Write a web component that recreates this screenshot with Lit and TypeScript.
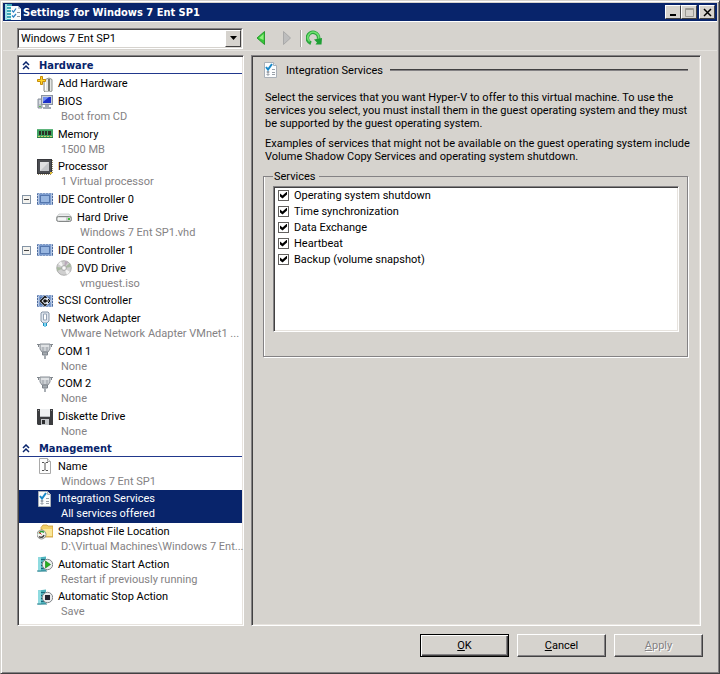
import { LitElement, html, svg, css, nothing, TemplateResult } from "lit";
import { customElement, state } from "lit/decorators.js";
import { classMap } from "lit/directives/class-map.js";

interface Item {
  id: string;
  label: string;
  detail?: string;
  icon: string;
  child?: boolean;
  expandable?: boolean;
}

interface Section {
  title: string;
  items: Item[];
}

const SECTIONS: Section[] = [
  {
    title: "Hardware",
    items: [
      { id: "add", label: "Add Hardware", icon: "add" },
      { id: "bios", label: "BIOS", detail: "Boot from CD", icon: "bios" },
      { id: "memory", label: "Memory", detail: "1500 MB", icon: "memory" },
      { id: "cpu", label: "Processor", detail: "1 Virtual processor", icon: "cpu" },
      { id: "ide0", label: "IDE Controller 0", icon: "ide", expandable: true },
      { id: "hdd", label: "Hard Drive", detail: "Windows 7 Ent SP1.vhd", icon: "hdd", child: true },
      { id: "ide1", label: "IDE Controller 1", icon: "ide", expandable: true },
      { id: "dvd", label: "DVD Drive", detail: "vmguest.iso", icon: "dvd", child: true },
      { id: "scsi", label: "SCSI Controller", icon: "scsi" },
      { id: "net", label: "Network Adapter", detail: "VMware Network Adapter VMnet1 ...", icon: "net" },
      { id: "com1", label: "COM 1", detail: "None", icon: "com" },
      { id: "com2", label: "COM 2", detail: "None", icon: "com" },
      { id: "floppy", label: "Diskette Drive", detail: "None", icon: "floppy" },
    ],
  },
  {
    title: "Management",
    items: [
      { id: "name", label: "Name", detail: "Windows 7 Ent SP1", icon: "name" },
      { id: "services", label: "Integration Services", detail: "All services offered", icon: "checklist" },
      { id: "snapshot", label: "Snapshot File Location", detail: "D:\\Virtual Machines\\Windows 7 Ent...", icon: "snapshot" },
      { id: "start", label: "Automatic Start Action", detail: "Restart if previously running", icon: "start" },
      { id: "stop", label: "Automatic Stop Action", detail: "Save", icon: "stop" },
    ],
  },
];

const SERVICES = [
  "Operating system shutdown",
  "Time synchronization",
  "Data Exchange",
  "Heartbeat",
  "Backup (volume snapshot)",
];

const server = svg`
  <path d="M1 1.5 9 .5V15L1 15.5Z" fill="#4fb3bd"/>
  <path d="M1 1.5 4 1V15.4L1 15.5Z" fill="#8fdbe0"/>
  <path d="M4 3.5h4M4 6.5h4M4 9.5h4M4 12.5h4" stroke="#17697a"/>
  <path d="M0 15h10" stroke="#2d7f8c"/>`;

const chip = svg`
  <rect y="2" width="16" height="12" fill="#b4c6e2"/>
  <path d="M.5 2v12M15.500 2v12" stroke="#4d6a9c" stroke-dasharray="2 1"/>
  <path d="M0 2.500h16M0 13.500h16" stroke="#7f9ac6" stroke-dasharray="2 1"/>
  <rect x="2" y="3" width="12" height="10" fill="#7c9dd0"/>
  <rect x="3.500" y="4.500" width="9" height="7" fill="#98b6e0" stroke="#5577ae"/>`;

const sheet = svg`
  <path d="M1.500.5h9l3 3v12h-12z" fill="#fbfcfd" stroke="#a9b0b8"/>
  <path d="M10.500.5v3h3" fill="#dfe4ea" stroke="#a9b0b8"/>`;

const ICONS: Record<string, TemplateResult> = {
  add: svg`
    <path d="M7 4 12 2l3 1.500V15l-2 1H8l-1-1z" fill="#e4e6e4" stroke="#8d918d"/>
    <path d="M12 3v12" stroke="#777b77" stroke-width="2"/>
    <path d="M8.500 5v9" stroke="#fff"/>
    <path d="M3.500.5h2v3h3v2h-3v3h-2v-3h-3v-2h3z" fill="#ffd528" stroke="#c58b08"/>`,
  bios: svg`
    <path d="M1 5h4v9H1z" fill="#b9bfc8" stroke="#8c949f"/>
    <path d="M2 7h2M2 9h2" stroke="#f5f7f9"/>
    <path d="M2 12h2v1H2z" fill="#5fbf4f"/>
    <rect x="4.500" y="1.500" width="11" height="9" fill="#c9cfd8" stroke="#8992a0"/>
    <rect x="6" y="3" width="8" height="6" fill="#1c2fc9"/>
    <path d="M6 3h6L6 8z" fill="#6f8cf0"/>
    <path d="M8 11h4v2h2v2H6v-2h2z" fill="#a4abb6"/>`,
  memory: svg`
    <rect y="3" width="16" height="9" fill="#3fa463"/>
    <path d="M0 3.500h16" stroke="#5fb57c"/>
    <path d="M2 5h2v4H2zM5 5h2v4H5zM8 5h2v4H8zM11 5h3v4h-3z" fill="#2b2f26"/>
    <path d="M1 10.500h14" stroke="#c9d36a" stroke-dasharray="2 1"/>
    <path d="M0 11.500h16" stroke="#2b8049"/>`,
  cpu: svg`
    <rect x=".5" y=".5" width="14" height="14" fill="#4b4d52" stroke="#37383c"/>
    <path d="M1 15.500h14M15.500 1v14" stroke="#9a8f6c" stroke-dasharray="1 1"/>
    <rect x="3" y="3" width="9" height="9" fill="#c4c6ca"/>
    <path d="M3 3h9L3 12z" fill="#dfe0e2"/>
    <path d="M13 13h2v2h-2z" fill="#e4bf3a"/>`,
  ide: chip,
  hdd: svg`
    <path d="M3 5h10l2.500 3H.5z" fill="#eceeee" stroke="#b3b6b6" stroke-width=".6"/>
    <rect x=".5" y="7.500" width="15" height="5" rx="2" fill="#c9cbcb" stroke="#858888"/>
    <path d="M2 10h8" stroke="#f3f5f5" stroke-width="3"/>
    <path d="M12 9h2v2h-2z" fill="#3fbf3a"/>`,
  dvd: svg`
    <circle cx="8" cy="8" r="7.300" fill="#cfcfcf" stroke="#a2a2a2" stroke-width=".8"/>
    <path d="M8 8 2 4l3-3zM8 8l6 4-3 3z" fill="#f4f4f4"/>
    <path d="M8 8 1 7l0 4zM8 8l6-5 1 4z" fill="#a9b9a2"/>
    <path d="M8 8 9 1l3 1z" fill="#b9a9b9"/>
    <circle cx="8" cy="8" r="2.500" fill="#e8e8e8" stroke="#999" stroke-width=".7"/>
    <circle cx="8" cy="8" r="1" fill="#fff"/>`,
  scsi: svg`
    ${chip}
    <path d="M8 2 14 8 8 14 2 8z" fill="#e9eef5"/>
    <path d="M9.500 5 8 3.500 3.500 8 8 12.500 9.500 11" fill="none" stroke="#111" stroke-width="1.500"/>
    <path d="M7 8h6M11 6l2 2-2 2" fill="none" stroke="#111"/>
    <circle cx="8" cy="8" r="1.800" fill="#111"/>`,
  net: svg`
    <path d="M5 1h6l1 1v8l-2 2H6l-2-2V2z" fill="#dfe6ef" stroke="#8695a8"/>
    <path d="M6.500 3h3v6h-3z" fill="#fff" stroke="#95a3b5"/>
    <path d="M6 12h1v3H6zM9 12h1v3H9z" fill="#1b93c4"/>
    <path d="M7 12h2v4H7z" fill="#7fd1ee"/>`,
  com: svg`
    <path d="M0 1.500h16M1.500 1v3M14.500 1v3" stroke="#80868c"/>
    <path d="M3 1h10v5l-2 3H5L3 6z" fill="#ccd0d4" stroke="#8b9198"/>
    <path d="M4 3h8" stroke="#f3f4f5"/>
    <path d="M5.500 9h5v3h-5z" fill="#a4aab0" stroke="#7d838a"/>
    <path d="M8 12v4" stroke="#a9aeb4" stroke-width="2"/>
    <path d="M6 4v4M10 4v4" stroke="#9a9fa6"/>`,
  floppy: svg`
    <path d="M0 0h16v16H1l-1-1z" fill="#3b3c3f"/>
    <path d="M3 0h10v8H3z" fill="#eef0f1"/>
    <path d="M3 7.500h10" stroke="#b9bcbf"/>
    <path d="M4 10h8v6H4z" fill="#c5c8cb"/>
    <path d="M5 11h3v4H5z" fill="#2d2e30"/>
    <path d="M1 1h1v1H1zM14 1h1v1h-1z" fill="#999"/>`,
  name: svg`
    <path d="M2.500.5h8l3 3v12h-11z" fill="#fdfdfd" stroke="#a9a9a9"/>
    <path d="M10.500.5v3h3" fill="#e6e6e6" stroke="#a9a9a9"/>
    <path d="M5 4.500h2l1 1 1-1h2M5 12.500h2l1-1 1 1h2M8 5.500v6" fill="none" stroke="#555"/>`,
  checklist: svg`
    ${sheet}
    <path d="M3 5 5 7.500 9 2" fill="none" stroke="#1888c8" stroke-width="2"/>
    <path d="M9 7.500h3M9 10.500h3M9 12.500h3" stroke="#9aa1a9"/>
    <path d="M4 9.500h2v1H4zM4 12h2v1H4z" fill="none" stroke="#9aa1a9"/>`,
  snapshot: svg`
    <path d="M4 3.500 6 1h4l1 1h5v11H5z" fill="#f1cf67" stroke="#c9983a" stroke-width=".8"/>
    <path d="M6 5h9v7H6z" fill="#fae79a"/>
    <circle cx="4.500" cy="10.500" r="4.500" fill="#f5f5f2" stroke="#777" stroke-width=".8"/>
    <path d="M2 9.500a3 3 0 0 1 5-1" fill="none" stroke="#299c35" stroke-width="1.500"/>
    <path d="M7 11a3 3 0 0 1-5 1.500" fill="none" stroke="#444" stroke-width="1.500"/>
    <path d="M4.500 10.500 2 8" stroke="#c22"/>`,
  start: svg`
    ${server}
    <circle cx="10.500" cy="8.500" r="5.200" fill="#e9ebec" stroke="#83878b"/>
    <path d="M8.500 5v7l5-3.500z" fill="#26b11c" stroke="#128010" stroke-width=".6"/>`,
  stop: svg`
    ${server}
    <circle cx="10.500" cy="8.500" r="5.200" fill="#e9ebec" stroke="#83878b"/>
    <path d="M8 6h5v5H8z" fill="#23232f"/>`,
  app: svg`
    <path d="M0 0h7v16H0z" fill="#3fa9b8"/>
    <path d="M0 0h2v16H0z" fill="#9adfe6"/>
    <path d="M2 2.500h4M2 5.500h4M2 8.500h4M2 11.500h4M2 14.500h4" stroke="#d5f2f4"/>
    <path d="M6 2h7l3 3v11H6z" fill="#fbfcfd"/>
    <path d="M13 2v3h3" fill="#c4cbd3"/>
    <path d="M7 6.500 8.500 8 11 4.500M7 11.500 8.500 13 11 10" fill="none" stroke="#2b7fc0" stroke-width="1.200"/>
    <path d="M12 8.500h3M12 12.500h3" stroke="#8d959e"/>`,
  back: svg`<path d="M10.500 1.500v13L3 8z" fill="#35c738" stroke="#2c9a30"/><path d="M9.500 4v6L5 8z" fill="#8df07c"/>`,
  forward: svg`<path d="M5.500 1.500v13L12.500 8z" fill="#bdbdbd" stroke="#a9a9a9"/>`,
  refresh: svg`
    <path d="M5 13.200A5.600 5.600 0 1 1 12.500 9" fill="none" stroke="#2aa53c" stroke-width="3.600"/>
    <path d="M3.600 11.500A5.400 5.400 0 1 1 12.500 9" fill="none" stroke="#6fe070" stroke-width="1.600"/>
    <path d="M8 9.500 16 8l-.5 6.500H9.500l1.500-2z" fill="#1f9f34"/>`,
};

const icon = (name: string, cls = "icon") =>
  html`<svg class=${cls} viewBox="0 0 16 16" aria-hidden="true">${ICONS[name]}</svg>`;

@customElement("app-root")
export class AppRoot extends LitElement {
  @state() private selected = "services";

  static styles = css`
    :host {
      --face: #d6d3ce;
      --navy: #08246b;
      display: block;
      height: 100vh;
      font: 11px/13px Roboto, "DejaVu Sans Condensed", sans-serif;
      color: #000;
    }
    * {
      box-sizing: border-box;
    }
    button,
    select,
    input {
      font: inherit;
      color: inherit;
      margin: 0;
      padding: 0;
      border-radius: 0;
      appearance: none;
    }
    svg {
      display: block;
      flex: none;
    }
    .icon {
      width: 16px;
      height: 16px;
    }
    .window {
      height: 100%;
      display: flex;
      flex-direction: column;
      background: var(--face);
      border: 1px solid;
      border-color: #d6d3ce #424142 #424142 #d6d3ce;
      box-shadow: inset 1px 1px #fff, inset -1px -1px #848284;
      padding: 2px;
    }
    .titlebar {
      flex: none;
      display: flex;
      align-items: center;
      gap: 2px;
      height: 18px;
      padding: 0 2px;
      background: var(--navy);
      color: #fff;
    }
    .titlebar h1,
    .tree h2 {
      margin: 0;
      font: bold 11px/13px "DejaVu Sans Condensed", "DejaVu Sans", sans-serif;
      white-space: nowrap;
    }
    .titlebar h1 {
      flex: 1;
    }
    .captions {
      display: flex;
    }
    .captions button {
      width: 16px;
      height: 14px;
      display: grid;
      place-items: center;
      background: var(--face);
      border: 1px solid;
      border-color: #fff #424142 #424142 #fff;
    }
    .captions .close {
      margin-left: 2px;
    }
    .captions svg {
      width: 10px;
      height: 10px;
    }
    .toolbar {
      flex: none;
      display: flex;
      align-items: center;
      height: 30px;
      padding: 4px 14px 0;
      border-top: 1px solid #fff;
      border-bottom: 1px solid #e4e2de;
    }
    .combo {
      display: grid;
      width: 226px;
      height: 21px;
      border: 1px solid;
      border-color: #848284 #fff #fff #848284;
    }
    .combo select {
      grid-area: 1 / 1;
      min-width: 0;
      padding-left: 2px;
      background: #fff;
      border: 1px solid;
      border-color: #424142 #d6d3ce #d6d3ce #424142;
    }
    .combo .drop {
      grid-area: 1 / 1;
      justify-self: end;
      display: grid;
      place-items: center;
      width: 16px;
      margin: 1px;
      background: var(--face);
      border: 1px solid;
      border-color: #fff #424142 #424142 #fff;
      pointer-events: none;
    }
    .drop svg {
      width: 7px;
      height: 4px;
    }
    .tools {
      display: flex;
      align-items: center;
      gap: 8px;
      margin-left: 11px;
    }
    .tools button {
      background: none;
      border: none;
    }
    .tools .rule {
      width: 2px;
      height: 17px;
      margin: 0 -4px 0 -2px;
      background: #a5a29e;
      border-right: 1px solid #fff;
    }
    .body {
      flex: 1;
      min-height: 0;
      display: flex;
      gap: 7px;
      padding: 4px 16px 0 14px;
    }
    .tree,
    .page,
    .checks {
      border: 1px solid;
      border-color: #848284 #fff #fff #848284;
      box-shadow: inset 1px 1px #424142, inset -1px -1px #e7e3de;
    }
    .tree {
      flex: none;
      width: 227px;
      display: flex;
      flex-direction: column;
      padding: 2px 1px 4px;
      background: #fff;
    }
    .tree h2 {
      flex: none;
      display: flex;
      align-items: center;
      gap: 9px;
      height: 16px;
      margin-bottom: 1px;
      padding-left: 3px;
      border-bottom: 1px solid #21388c;
      color: var(--navy);
    }
    .tree h2 svg {
      width: 8px;
      height: 9px;
    }
    .row {
      flex: 0 0 18px;
      display: flex;
      padding-left: 3px;
    }
    .row.tall {
      flex: 1 1 32px;
      max-height: 33px;
    }
    .row.selected {
      background: var(--navy);
    }
    .row.child {
      padding-left: 22px;
    }
    .expander,
    .blank {
      flex: none;
      width: 9px;
      height: 9px;
      margin: 4px 6px 0 0;
    }
    .expander {
      background: linear-gradient(#424142, #424142) center / 5px 1px no-repeat #f4f3ef;
      border: 1px solid #8494a5;
    }
    .entry {
      flex: 1;
      min-width: 0;
      display: grid;
      grid-template-columns: 16px 1fr;
      grid-template-rows: 17px;
      grid-auto-rows: 13px;
      column-gap: 5px;
      align-content: start;
      align-items: center;
      background: none;
      border: none;
      text-align: left;
      white-space: nowrap;
    }
    .detail {
      grid-column: 2;
      padding-left: 3px;
      color: #848284;
    }
    .selected .entry,
    .selected .detail {
      color: #fff;
    }
    .page {
      flex: 1;
      min-width: 0;
      padding: 6px 12px 12px 11px;
    }
    .heading {
      display: flex;
      align-items: center;
      gap: 7px;
      height: 16px;
      margin-bottom: 13px;
    }
    .heading h2 {
      margin: 0;
      font-size: 11px;
      font-weight: normal;
    }
    .heading .line {
      flex: 1;
      height: 2px;
      background: #424142;
      border-bottom: 1px solid #848284;
    }
    p {
      margin: 0 -4px 7px 2px;
    }
    fieldset {
      height: 187px;
      margin: 0;
      padding: 3px 8px 24px 9px;
      border: 1px solid #848284;
      box-shadow: inset 1px 0 #fff, 1px 1px #fff;
      display: flex;
    }
    legend {
      padding: 0 4px 0 1px;
    }
    .checks {
      flex: 1;
      margin: 0;
      padding: 0 4px;
      list-style: none;
      background: #fff;
    }
    .checks label {
      display: flex;
      align-items: center;
      gap: 5px;
      height: 16px;
    }
    .checks input {
      display: grid;
      place-items: center;
      width: 11px;
      height: 11px;
      border: 1px solid #63615f;
      background: #fff;
    }
    .checks input:checked::before {
      content: "";
      width: 7px;
      height: 7px;
      background: #000;
      clip-path: polygon(0 29%, 36% 57%, 100% 0, 100% 43%, 36% 100%, 0 71%);
    }
    .actions {
      flex: none;
      display: flex;
      justify-content: flex-end;
      gap: 8px;
      padding: 8px 14px 14px;
    }
    .actions button {
      width: 89px;
      height: 23px;
      background: var(--face);
      border: 1px solid;
      border-color: #fff #424142 #424142 #fff;
      box-shadow: inset -1px -1px #848284;
    }
    .actions .default {
      border-color: #000;
      box-shadow: inset 1px 1px #fff, inset -1px -1px #424142, inset -2px -2px #848284;
    }
    .actions button:disabled {
      color: #848284;
      text-shadow: 1px 1px #fff;
    }
  `;

  private renderItem(item: Item) {
    const classes = {
      row: true,
      tall: !!item.detail,
      child: !!item.child,
      selected: this.selected === item.id,
    };
    return html`<div class=${classMap(classes)}>
      ${item.expandable
        ? html`<button class="expander" aria-label="Collapse ${item.label}"></button>`
        : html`<span class="blank"></span>`}
      <button class="entry" @click=${() => (this.selected = item.id)}>
        ${icon(item.icon)}
        <span>${item.label}</span>
        ${item.detail ? html`<span class="detail">${item.detail}</span>` : nothing}
      </button>
    </div>`;
  }

  render() {
    return html`<main class="window">
      <header class="titlebar">
        ${icon("app")}
        <h1>Settings for Windows 7 Ent SP1</h1>
        <div class="captions">
          <button aria-label="Minimize"><svg viewBox="0 0 10 10"><path d="M2 7h6v2H2z" /></svg></button>
          <button aria-label="Maximize"><svg viewBox="0 0 10 10"><path d="M1.500 1.500h8v8h-8zM1.500 2.500h8" fill="none" stroke="#9c9a94" /></svg></button>
          <button class="close" aria-label="Close"><svg viewBox="0 0 10 10"><path d="M2 2l7 7M9 2 2 9" stroke="#000" stroke-width="1.500" /></svg></button>
        </div>
      </header>

      <div class="toolbar">
        <div class="combo">
          <select aria-label="Virtual machine"><option>Windows 7 Ent SP1</option></select>
          <span class="drop"><svg viewBox="0 0 7 4"><path d="M0 0h7L3.500 4z" /></svg></span>
        </div>
        <div class="tools">
          <button aria-label="Back">${icon("back")}</button>
          <button aria-label="Forward" disabled>${icon("forward")}</button>
          <span class="rule"></span>
          <button aria-label="Refresh">${icon("refresh")}</button>
        </div>
      </div>

      <div class="body">
        <nav class="tree" aria-label="Settings">
          ${SECTIONS.map(
            (s) => html`<h2>
                <svg viewBox="0 0 8 9" aria-hidden="true"><path d="M1 4 4 1l3 3M1 8l3-3 3 3" fill="none" stroke="#08246b" stroke-width="1.500" /></svg>
                ${s.title}
              </h2>
              ${s.items.map((i) => this.renderItem(i))}`
          )}
        </nav>

        <section class="page">
          <div class="heading">
            ${icon("checklist")}
            <h2>Integration Services</h2>
            <span class="line"></span>
          </div>
          <p>Select the services that you want Hyper-V to offer to this virtual machine. To use the services you select, you must install them in the guest operating system and they must be supported by the guest operating system.</p>
          <p>Examples of services that might not be available on the guest operating system include Volume Shadow Copy Services and operating system shutdown.</p>
          <fieldset>
            <legend>Services</legend>
            <ul class="checks">
              ${SERVICES.map((s) => html`<li><label><input type="checkbox" checked />${s}</label></li>`)}
            </ul>
          </fieldset>
        </section>
      </div>

      <footer class="actions">
        <button class="default"><u>O</u>K</button>
        <button><u>C</u>ancel</button>
        <button disabled><u>A</u>pply</button>
      </footer>
    </main>`;
  }
}
